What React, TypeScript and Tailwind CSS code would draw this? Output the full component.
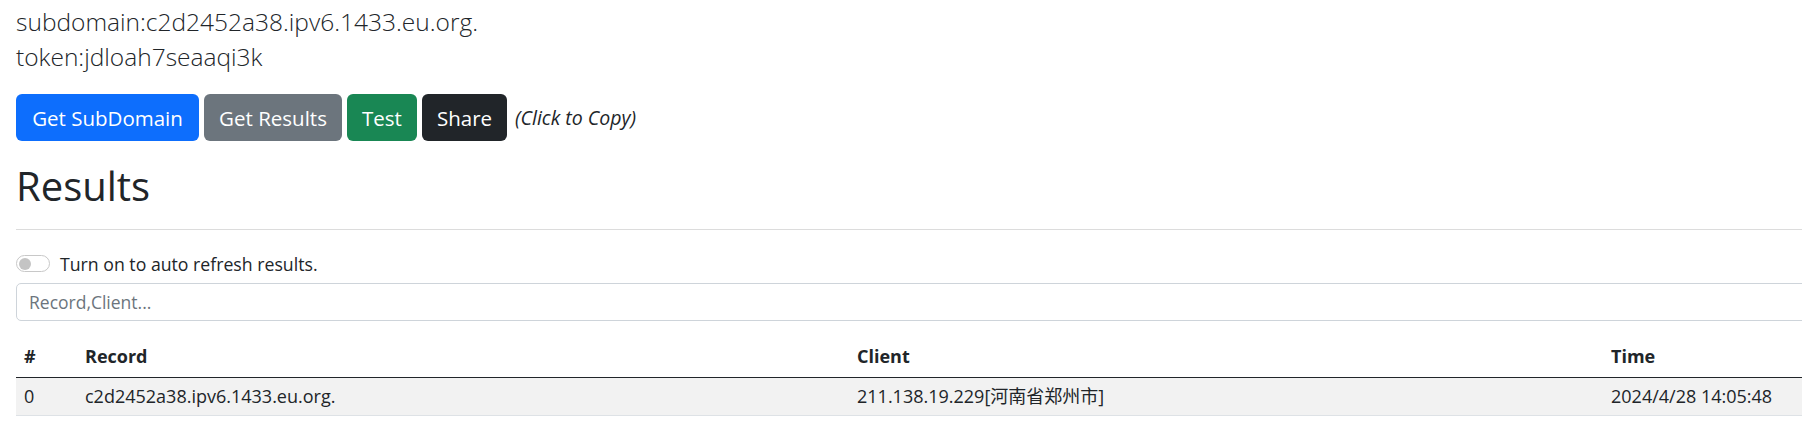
import React from "react";

const buttons = [
  { label: "Get SubDomain", cls: "w-[183px] bg-[#0d6efd]" },
  { label: "Get Results", cls: "w-[138px] bg-[#6c757d]" },
  { label: "Test", cls: "w-[70px] bg-[#198754]" },
  { label: "Share", cls: "w-[85px] bg-[#212529]" },
];

const App = () => {
  return (
    <div className="w-full overflow-hidden bg-white">
      <main className="w-[1840px] pl-4 pt-[4px] text-[#212529] font-['Open_Sans','Noto_Sans_CJK_SC',sans-serif]">
        <p className="text-[24.5px] font-light leading-[35px]">
          subdomain:c2d2452a38.ipv6.1433.eu.org.
        </p>
        <p className="text-[24.5px] font-light leading-[35px]">
          token:jdloah7seaaqi3k
        </p>

        <div className="mt-[20px] flex items-center gap-[5px]">
          {buttons.map((b) => (
            <button
              key={b.label}
              className={`${b.cls} h-[47px] rounded-[6px] text-white text-[20.5px] leading-[30px] flex items-center justify-center`}
            >
              {b.label}
            </button>
          ))}
          <span className="ml-[3px] italic text-[19.5px]">(Click to Copy)</span>
        </div>

        <h1 className="mt-[19px] text-[40px] leading-[52px]">Results</h1>
        <hr className="mt-[17px] border-0 border-t border-[#dcdcdc]" />

        <div className="mt-[25px] flex items-center h-[17px] gap-[10px]">
          <div className="w-[34px] h-[17px] rounded-full border border-[#c8c8c8] flex items-center pl-[2px]">
            <div className="w-[12px] h-[12px] rounded-full bg-[#c4c4c4]" />
          </div>
          <span className="text-[17.7px] leading-[24px]">Turn on to auto refresh results.</span>
        </div>

        <input
          type="text"
          placeholder="Record,Client..."
          className="mt-[11px] block w-full h-[38px] px-3 border border-[#ced4da] rounded-[5px] text-[17.5px] placeholder:text-[#6c757d] outline-none"
        />

        <table className="mt-4 w-full table-fixed border-collapse text-[18px]">
          <colgroup>
            <col className="w-[61px]" />
            <col className="w-[772px]" />
            <col className="w-[754px]" />
            <col />
          </colgroup>
          <thead>
            <tr className="h-[40px] border-b border-[#212529] text-left">
              <th className="px-2 font-bold">#</th>
              <th className="px-2 font-bold">Record</th>
              <th className="px-2 font-bold">Client</th>
              <th className="px-2 font-bold">Time</th>
            </tr>
          </thead>
          <tbody>
            <tr className="h-[38px] bg-[#f2f2f2] border-b border-[#dee2e6]">
              <td className="px-2">0</td>
              <td className="px-2">c2d2452a38.ipv6.1433.eu.org.</td>
              <td className="px-2">211.138.19.229[河南省郑州市]</td>
              <td className="px-2">2024/4/28 14:05:48</td>
            </tr>
          </tbody>
        </table>
      </main>
    </div>
  );
};

export default App;
